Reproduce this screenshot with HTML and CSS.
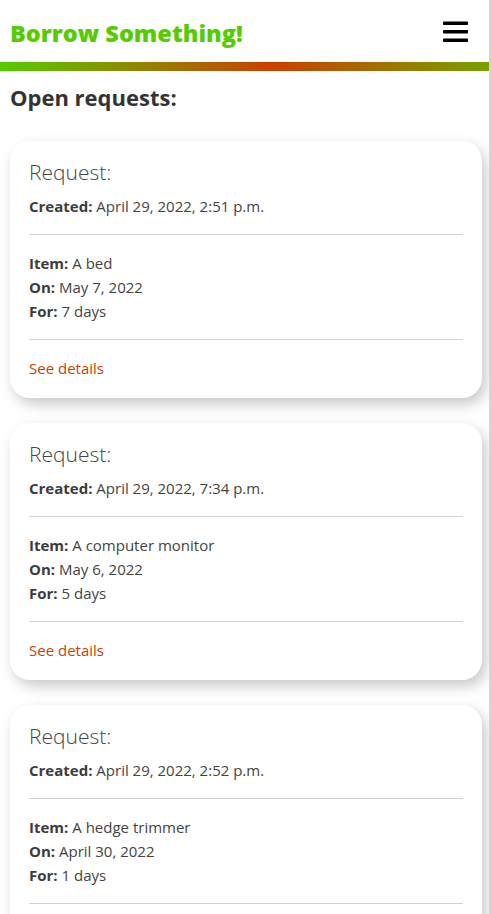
FILE: index.html
```html
<!DOCTYPE html>
<html lang="en">
<head>
<meta charset="utf-8">
<title>Borrow Something!</title>
<link rel="stylesheet" href="styles.css">
</head>
<body>
<header class="site-header">
  <div class="brand">Borrow Something!</div>
  <button class="menu-btn" aria-label="Menu">
    <svg width="26" height="22" viewBox="0 0 26 22"><rect x="0" y="0.5" width="25" height="3.5" rx="0.8" fill="#000"/><rect x="0" y="9" width="25" height="3.5" rx="0.8" fill="#000"/><rect x="0" y="17.5" width="25" height="3.5" rx="0.8" fill="#000"/></svg>
  </button>
</header>
<div class="stripe"></div>
<main class="content">
  <h2 class="page-title">Open requests:</h2>

  <section class="card">
    <h3 class="card-title">Request:</h3>
    <p class="line created"><b>Created:</b> April 29, 2022, 2:51 p.m.</p>
    <hr>
    <div class="details">
      <p class="line"><b>Item:</b> A bed</p>
      <p class="line"><b>On:</b> May 7, 2022</p>
      <p class="line"><b>For:</b> 7 days</p>
    </div>
    <hr>
    <a class="more" href="#">See details</a>
  </section>

  <section class="card">
    <h3 class="card-title">Request:</h3>
    <p class="line created"><b>Created:</b> April 29, 2022, 7:34 p.m.</p>
    <hr>
    <div class="details">
      <p class="line"><b>Item:</b> A computer monitor</p>
      <p class="line"><b>On:</b> May 6, 2022</p>
      <p class="line"><b>For:</b> 5 days</p>
    </div>
    <hr>
    <a class="more" href="#">See details</a>
  </section>

  <section class="card">
    <h3 class="card-title">Request:</h3>
    <p class="line created"><b>Created:</b> April 29, 2022, 2:52 p.m.</p>
    <hr>
    <div class="details">
      <p class="line"><b>Item:</b> A hedge trimmer</p>
      <p class="line"><b>On:</b> April 30, 2022</p>
      <p class="line"><b>For:</b> 1 days</p>
    </div>
    <hr>
    <a class="more" href="#">See details</a>
  </section>
</main>
</body>
</html>
```
FILE: styles.css
```css
* { box-sizing: border-box; }
html { background: #fff; }
body {
  margin: 0;
  width: 491px;
  border-right: 2px solid #d6d6d6;
  font-family: "Open Sans", "Noto Sans", sans-serif;
  color: #444;
  background: #fff;
}
.site-header {
  height: 62px;
  display: flex;
  align-items: center;
  justify-content: space-between;
  padding: 0 20px 0 10px;
}
.brand {
  font-family: "Open Sans", "Noto Sans", sans-serif;
  font-weight: 800;
  font-size: 23.5px;
  color: #55cc00;
  margin-top: 4px;
}
.menu-btn {
  border: 0;
  background: none;
  padding: 0;
  display: flex;
  margin-top: 2px;
}
.stripe {
  height: 9px;
  background: linear-gradient(90deg, #55cc00 0%, #cc4000 55.6%, #78a000 100%);
}
.content {
  padding: 0 7px 10px 10px;
}
.page-title {
  margin: 12px 0 30px;
  font-size: 22px;
  line-height: 28px;
  font-weight: 700;
  color: #333;
}
.card {
  background: #fff;
  border-radius: 20px;
  padding: 19px 19px 18px;
  margin-bottom: 25px;
  box-shadow: 4px 6px 14px rgba(0,0,0,0.22);
}
.card-title {
  margin: 0;
  font-weight: 300;
  font-size: 21px;
  line-height: 25px;
  color: #444;
}
.line {
  margin: 0;
  font-size: 15px;
  line-height: 24px;
}
.line b { color: #3c3c3c; }
.created { margin-top: 9px; }
hr {
  border: 0;
  border-top: 1px solid #d2d2d2;
  margin: 16px 0 0;
}
.details { margin-top: 16px; margin-bottom: 16px; }
.more {
  display: block;
  margin-top: 16px;
  font-size: 15px;
  line-height: 24px;
  color: #cc4000;
  text-decoration: none;
}
```
